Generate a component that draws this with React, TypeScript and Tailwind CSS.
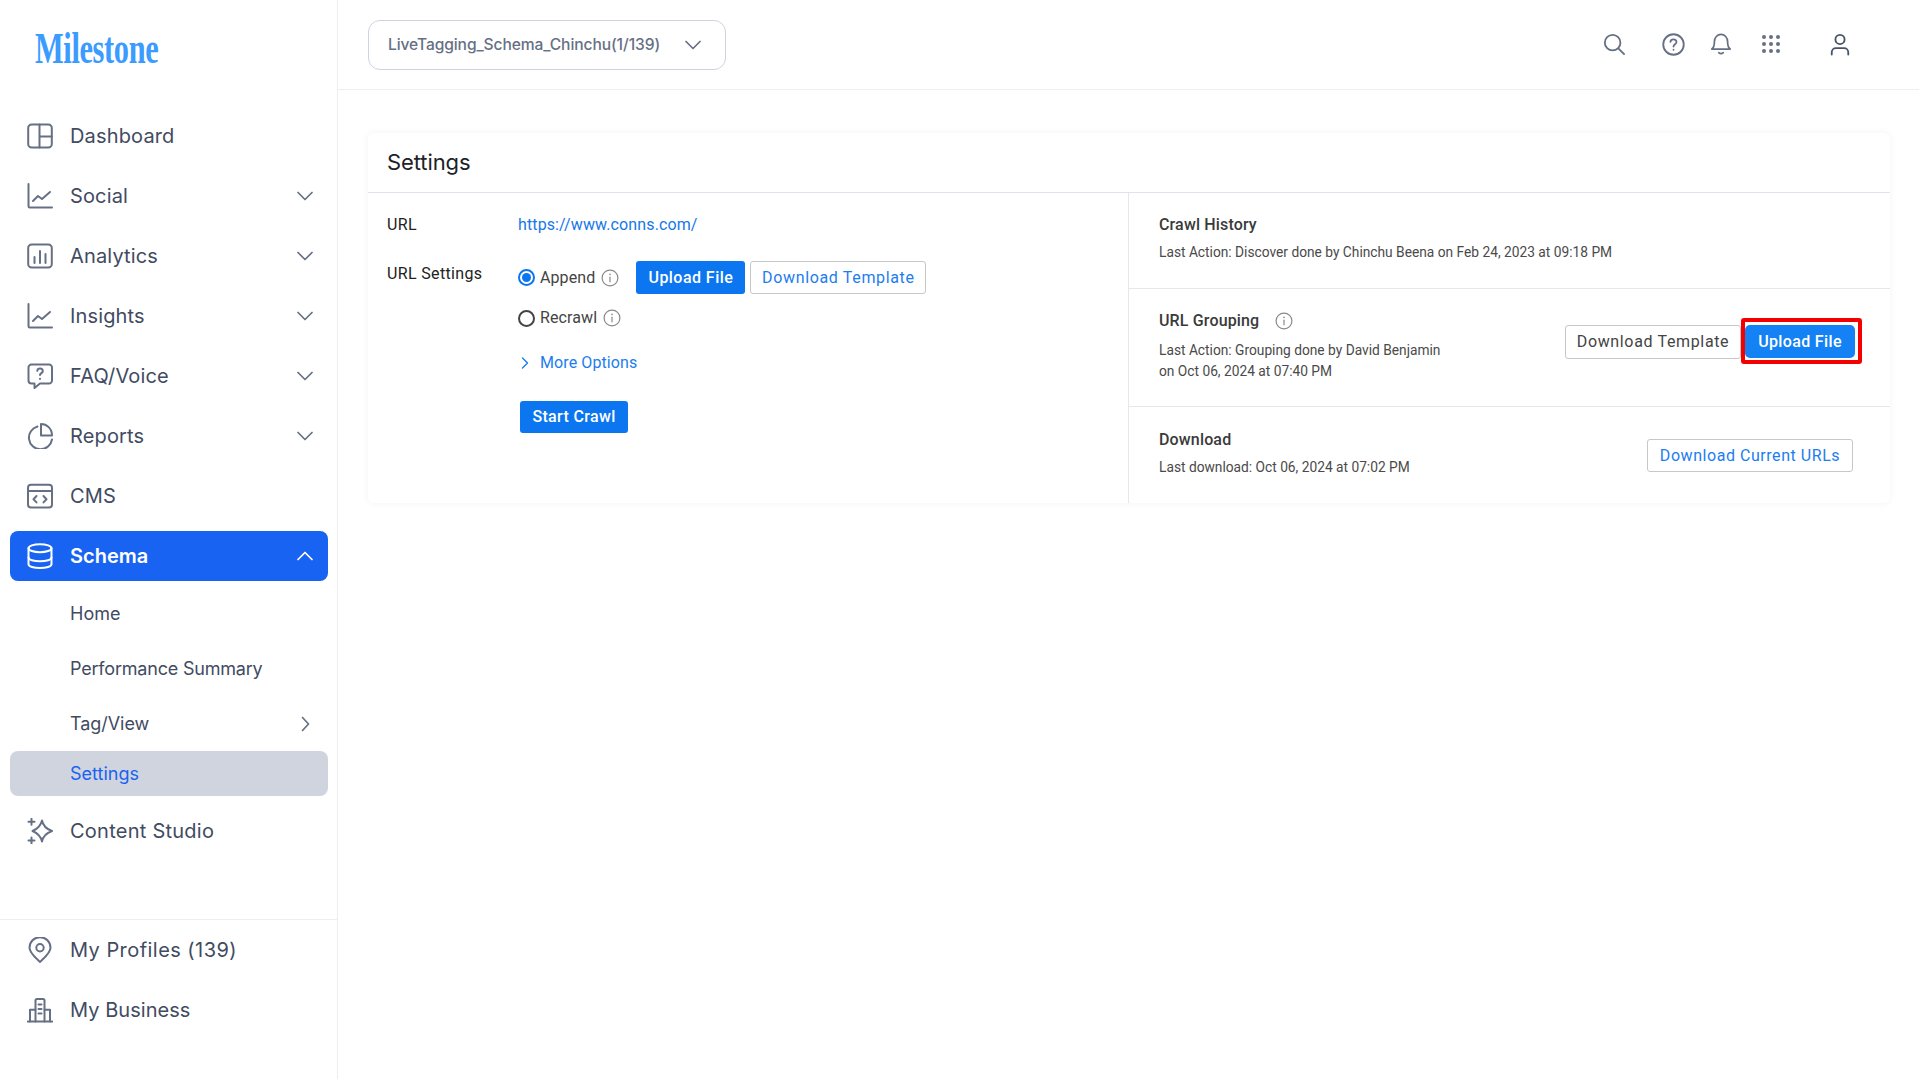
import React from "react";

const Ic = ({ children, size = 26, cls = "" }: { children: React.ReactNode; size?: number; cls?: string }) => (
  <svg width={size} height={size} viewBox="0 0 26 26" fill="none" stroke="currentColor" strokeWidth="2" strokeLinecap="round" strokeLinejoin="round" className={"shrink-0 " + cls}>
    {children}
  </svg>
);

const ChartIcon = () => (
  <Ic>
    <path d="M1.500 1v22.200c0 .8.4 1.300 1.200 1.300h22.300" />
    <path d="M6 18l5-5 4 3 8-7" />
  </Ic>
);

const icons: Record<string, React.ReactNode> = {
  dashboard: (
    <Ic>
      <rect x="1.200" y="1.500" width="23.600" height="23" rx="3.500" />
      <path d="M12.500 1.500v23M12.500 13.500h12.300" />
    </Ic>
  ),
  social: <ChartIcon />,
  analytics: (
    <Ic>
      <rect x="1.200" y="1.500" width="23.600" height="23" rx="3.500" />
      <path d="M7.500 14v6M13 8v12M18.500 11v9" />
    </Ic>
  ),
  insights: <ChartIcon />,
  faq: (
    <Ic>
      <path d="M4.500 1.500h17.500a3 3 0 0 1 3 3v13a3 3 0 0 1-3 3h-9l-5.500 4.500v-4.500h-3a3 3 0 0 1-3-3v-13a3 3 0 0 1 3-3z" />
      <path d="M10.300 7.800c.2-1.500 1.400-2.400 2.900-2.300 1.600.1 2.700 1.200 2.600 2.600-.1 1.900-2.800 2.200-2.800 4" />
      <path d="M13 15.800v.1" />
    </Ic>
  ),
  reports: (
    <Ic>
      <path d="M10.500 3.500A11.600 11.600 0 1 0 25 16.500" />
      <path d="M14 1c5.800 0 11 4.500 11 11.500H14z" />
    </Ic>
  ),
  cms: (
    <Ic>
      <rect x="1" y="1.800" width="24" height="22.700" rx="3" />
      <path d="M1 8h24" />
      <path d="M9.500 13l-3 3.200 3 3.200M16.500 13l3 3.200-3 3.200" />
    </Ic>
  ),
  schema: (
    <Ic>
      <ellipse cx="13" cy="5.200" rx="11.500" ry="4" />
      <path d="M1.500 5.200v16c0 2.200 5.200 3.800 11.500 3.800s11.500-1.600 11.500-3.800v-16" />
      <path d="M1.500 14.500c0 2.200 5.200 3.800 11.500 3.800s11.500-1.600 11.500-3.800" />
    </Ic>
  ),
  studio: (
    <Ic>
      <path d="M15 2.500c1 5.200 3.800 8.300 10 10.500-6.200 2.200-9 5.300-10 10.500-1.200-5.200-4-8.300-9.500-10.500C11 10.800 13.800 7.700 15 2.500z" />
      <path d="M4.500 0.800v6M1.500 3.800h6M4.500 19.500v6M1.500 22.500h6" />
    </Ic>
  ),
  profiles: (
    <Ic>
      <path d="M13 25c-1.200-1.700-10.500-8.500-10.500-14.300a10.500 10.500 0 0 1 21 0C23.500 16.500 14.200 23.300 13 25z" />
      <circle cx="13" cy="10.700" r="3.700" />
    </Ic>
  ),
  business: (
    <Ic>
      <path d="M.9 24.600h24.200" />
      <path d="M3 24.600V12.800h5.500M23 24.600V12.800h-5.500" />
      <path d="M8.500 24.600V3.500a1.500 1.500 0 0 1 1.500-1.500h6a1.500 1.500 0 0 1 1.500 1.500v21.100" />
      <path d="M11.500 7.500h3M11.500 12h3M11.500 16.500h3" />
    </Ic>
  ),
};

const Chevron = ({ up = false, right = false, cls = "" }: { up?: boolean; right?: boolean; cls?: string }) => (
  <svg width="16" height="16" viewBox="0 0 16 16" fill="none" stroke="currentColor" strokeWidth="1.700" strokeLinecap="round" strokeLinejoin="round" className={"shrink-0 " + cls}>
    {right ? <path d="M5.500 1.500L11.500 8l-6 6.500" /> : up ? <path d="M1 11.500l7-7 7 7" /> : <path d="M1 4.500l7 7 7-7" />}
  </svg>
);

const Info = ({ cls = "" }: { cls?: string }) => (
  <svg width="18" height="18" viewBox="0 0 18 18" fill="none" stroke="#8a8a8a" strokeWidth="1.200" strokeLinecap="round" className={"shrink-0 " + cls}>
    <circle cx="9" cy="9" r="7.900" />
    <path d="M9 8.200v4.600" />
    <path d="M9 5.300v.1" strokeWidth="1.600" />
  </svg>
);

const NavRow = ({ icon, label, chevron = false, track = "tracking-[0.15px]" }: { icon: string; label: string; chevron?: boolean; track?: string }) => (
  <div className="h-[60px] flex items-center pl-[27px] pr-[24px] text-[#475467]">
    <span className="text-[#667085]">{icons[icon]}</span>
    <span className={"ml-[17px] text-[20px] text-[#414b62] " + track}>{label}</span>
    {chevron && <Chevron cls="ml-auto text-[#667085]" />}
  </div>
);

const btnBase = "rounded-[3px] text-[16px] font-medium tracking-[0.35px] flex items-center justify-center";

export default function App() {
  return (
    <div className="w-[1919px] h-[1079px] flex bg-white overflow-hidden font-['Roboto',sans-serif]">
      <aside className="w-[338px] shrink-0 border-r border-[#eceef1] flex flex-col font-['Inter',sans-serif]">
        <div className="h-[106px] flex items-center pl-[35px] pb-[8px]">
          <span className="font-['Liberation_Serif',serif] font-bold text-[44px] leading-none text-[#3b9bff] scale-x-[0.69] origin-left tracking-[-0.5px]">Milestone</span>
        </div>
        <NavRow icon="dashboard" label="Dashboard" />
        <NavRow icon="social" label="Social" chevron />
        <NavRow icon="analytics" label="Analytics" chevron />
        <NavRow icon="insights" label="Insights" chevron />
        <NavRow icon="faq" label="FAQ/Voice" chevron />
        <NavRow icon="reports" label="Reports" chevron />
        <NavRow icon="cms" label="CMS" />
        <div className="mt-[5px] ml-[10px] mr-[9px] h-[50px] rounded-[8px] bg-[#1963f2] flex items-center pl-[17px] pr-[15px] text-white">
          {icons.schema}
          <span className="ml-[17px] text-[20px] font-semibold">Schema</span>
          <Chevron up cls="ml-auto" />
        </div>
        <div className="h-[55px] mt-[5px] flex items-center pl-[70px] text-[18px] text-[#414b62]">Home</div>
        <div className="h-[55px] flex items-center pl-[70px] text-[18px] tracking-[-0.2px] text-[#414b62]">Performance Summary</div>
        <div className="h-[55px] flex items-center pl-[70px] pr-[24px] text-[18px] tracking-[-0.05px] text-[#414b62]">
          Tag/View
          <Chevron right cls="ml-auto text-[#667085]" />
        </div>
        <div className="ml-[10px] mr-[9px] h-[45px] rounded-[8px] bg-[#cfd4de] flex items-center pl-[60px] text-[18px] text-[#1963f2]">Settings</div>
        <div className="mt-[5px]">
          <NavRow icon="studio" label="Content Studio" track="tracking-[0.25px]" />
        </div>
        <div className="mt-[58px] border-t border-[#eceef1]">
          <NavRow icon="profiles" label="My Profiles (139)" track="tracking-[0.45px]" />
          <NavRow icon="business" label="My Business" track="tracking-[0.05px]" />
        </div>
      </aside>

      <div className="flex-1 flex flex-col min-w-0">
        <header className="h-[90px] shrink-0 border-b border-[#eceef1] flex items-center pl-[30px] pr-[68px]">
          <div className="w-[358px] h-[50px] rounded-[12px] border border-[#cfd3e0] flex items-center pl-[19px] pr-[24px] text-[#667085]">
            <span className="text-[15.6px] font-['Inter',sans-serif] font-medium tracking-[-0.1px]">LiveTagging_Schema_Chinchu(1/139)</span>
            <Chevron cls="ml-auto" />
          </div>
          <div className="ml-auto -mt-[1px] flex items-center text-[#667085]">
            <svg width="22" height="22" viewBox="0 0 24 24" fill="none" stroke="currentColor" strokeWidth="2" strokeLinecap="round"><circle cx="10.500" cy="10.500" r="8.500" /><path d="M17 17l6 6" /></svg>
            <svg className="ml-[37px]" width="23" height="23" viewBox="0 0 24 24" fill="none" stroke="currentColor" strokeWidth="1.900" strokeLinecap="round"><circle cx="12" cy="12" r="10.700" /><path d="M8.800 9.300c.3-1.700 1.600-2.700 3.300-2.600 1.800.1 3.100 1.300 3 2.900-.1 2.100-3.100 2.300-3.100 4.600" /><path d="M12 17.400v.1" /></svg>
            <svg className="ml-[25px]" width="22" height="24" viewBox="0 0 24 24" fill="none" stroke="currentColor" strokeWidth="1.900" strokeLinecap="round" strokeLinejoin="round"><path d="M2 17.500c2-1.500 2.800-3.500 2.800-8C4.800 5 8 1.500 12 1.500S19.200 5 19.200 9.500c0 4.500.8 6.500 2.800 8z" /><path d="M9.500 21.500c1.500 1.300 3.500 1.300 5 0" /></svg>
            <span className="ml-[30px] grid grid-cols-3 gap-[3px] w-[18px]">
              {Array.from({ length: 9 }).map((_, i) => (
                <span key={i} className="w-[4px] h-[4px] rounded-full bg-[#667085]" />
              ))}
            </span>
            <svg className="ml-[49px] text-[#475467]" width="22" height="23" viewBox="0 0 24 24" fill="none" stroke="currentColor" strokeWidth="2" strokeLinecap="round"><circle cx="12" cy="6.500" r="5" /><path d="M3 23v-2.500c0-2.500 2-4.500 4.500-4.500h9c2.500 0 4.500 2 4.500 4.500V23" /></svg>
          </div>
        </header>

        <main className="flex-1 pt-[43px] pl-[30px] pr-[29px]">
          <section className="rounded-[6px] bg-white shadow-[0_0_8px_rgba(16,24,40,0.05)]">
            <div className="h-[60px] flex items-center pl-[19px] border-b border-[#e1e3ec] text-[22px] tracking-[-0.1px] text-[#1d2129] font-['Inter',sans-serif]">Settings</div>
            <div className="flex h-[310px]">
              <div className="w-[761px] shrink-0 border-r border-[#e6e7eb] pl-[19px] pt-[22px] text-[16px]">
                <div className="flex items-center h-[20px] mb-[28px]">
                  <span className="w-[131px] text-[#222] text-[16px] tracking-[0.35px]">URL</span>
                  <span className="text-[#1677e8] text-[16px] tracking-[0.12px]">https://www.conns.com/</span>
                </div>
                <div className="flex">
                  <span className="w-[131px] -mt-[1px] text-[#222] text-[16px] tracking-[0.35px]">URL Settings</span>
                  <div className="flex flex-col -mt-[3px]">
                    <div className="flex items-center h-[35px]">
                      <span className="w-[17px] h-[17px] rounded-full border-[2px] border-[#0d76ee] flex items-center justify-center">
                        <span className="w-[9px] h-[9px] rounded-full bg-[#0d76ee]" />
                      </span>
                      <span className="ml-[5px] text-[#444] tracking-[0.1px]">Append</span>
                      <Info cls="ml-[6px]" />
                      <button className={btnBase + " ml-[17px] w-[109px] h-[33px] bg-[#0b76ef] text-white tracking-[0.45px]"}>Upload File</button>
                      <button className={btnBase + " ml-[5px] w-[176px] h-[33px] border border-[#c7c7c7] text-[#1c7df0] font-normal tracking-[0.65px]"}>Download Template</button>
                    </div>
                    <div className="flex items-center h-[20px] mt-[13px]">
                      <span className="w-[17px] h-[17px] rounded-full border-[2px] border-[#444]" />
                      <span className="ml-[5px] text-[#444] tracking-[0.1px]">Recrawl</span>
                      <Info cls="ml-[6px]" />
                    </div>
                    <div className="flex items-center h-[20px] mt-[25px] text-[#1c7df0] tracking-[0.1px]">
                      <svg width="10" height="12" viewBox="0 0 10 12" fill="none" stroke="currentColor" strokeWidth="1.400" strokeLinecap="round" strokeLinejoin="round" className="ml-[2px]"><path d="M2.500 1l5 5-5 5" /></svg>
                      <span className="ml-[10px]">More Options</span>
                    </div>
                    <button className={btnBase + " mt-[28px] ml-[2px] w-[108px] h-[32px] bg-[#0b76ef] text-white tracking-[0.2px]"}>Start Crawl</button>
                  </div>
                </div>
              </div>
              <div className="flex-1 flex flex-col">
                <div className="h-[96px] border-b border-[#e6e7eb] pl-[30px] pt-[22px]">
                  <div className="text-[16px] font-medium leading-[20px] tracking-[0.15px] text-[#3a3a3a]">Crawl History</div>
                  <div className="mt-[7px] text-[13.75px] leading-[20px] text-[#4a4a4a]">Last Action: Discover done by Chinchu Beena on Feb 24, 2023 at 09:18 PM</div>
                </div>
                <div className="h-[118px] border-b border-[#e6e7eb] pl-[30px] pr-[28px] flex items-start justify-between">
                  <div className="pt-[22px]">
                    <div className="flex items-center h-[20px] text-[16px] font-medium tracking-[0.15px] text-[#3a3a3a]">URL Grouping<Info cls="ml-[16px]" /></div>
                    <div className="mt-[9px] text-[13.75px] leading-[21px] text-[#4a4a4a]">Last Action: Grouping done by David Benjamin<br />on Oct 06, 2024 at 07:40 PM</div>
                  </div>
                  <div className="flex items-start pt-[29px]">
                    <button className={btnBase + " mt-[7px] w-[176px] h-[34px] border border-[#c7c7c7] text-[#444] font-normal tracking-[0.65px]"}>Download Template</button>
                    <div className="border-[4px] border-[#f50000] rounded-[3px] pt-[3px] pb-[2px] pl-[0px] pr-[3px]">
                      <button className={btnBase + " w-[110px] h-[33px] bg-[#1482f5] text-white rounded-[5px]"}>Upload File</button>
                    </div>
                  </div>
                </div>
                <div className="flex-1 pl-[30px] pr-[37px] flex items-start justify-between">
                  <div className="pt-[23px]">
                    <div className="text-[16px] font-medium leading-[20px] tracking-[0.15px] text-[#3a3a3a]">Download</div>
                    <div className="mt-[7px] text-[13.75px] leading-[20px] text-[#4a4a4a]">Last download: Oct 06, 2024 at 07:02 PM</div>
                  </div>
                  <button className={btnBase + " mt-[32px] w-[206px] h-[33px] border border-[#c7c7c7] text-[#1c7df0] font-normal tracking-[0.55px]"}>Download Current URLs</button>
                </div>
              </div>
            </div>
          </section>
        </main>
      </div>
    </div>
  );
}
